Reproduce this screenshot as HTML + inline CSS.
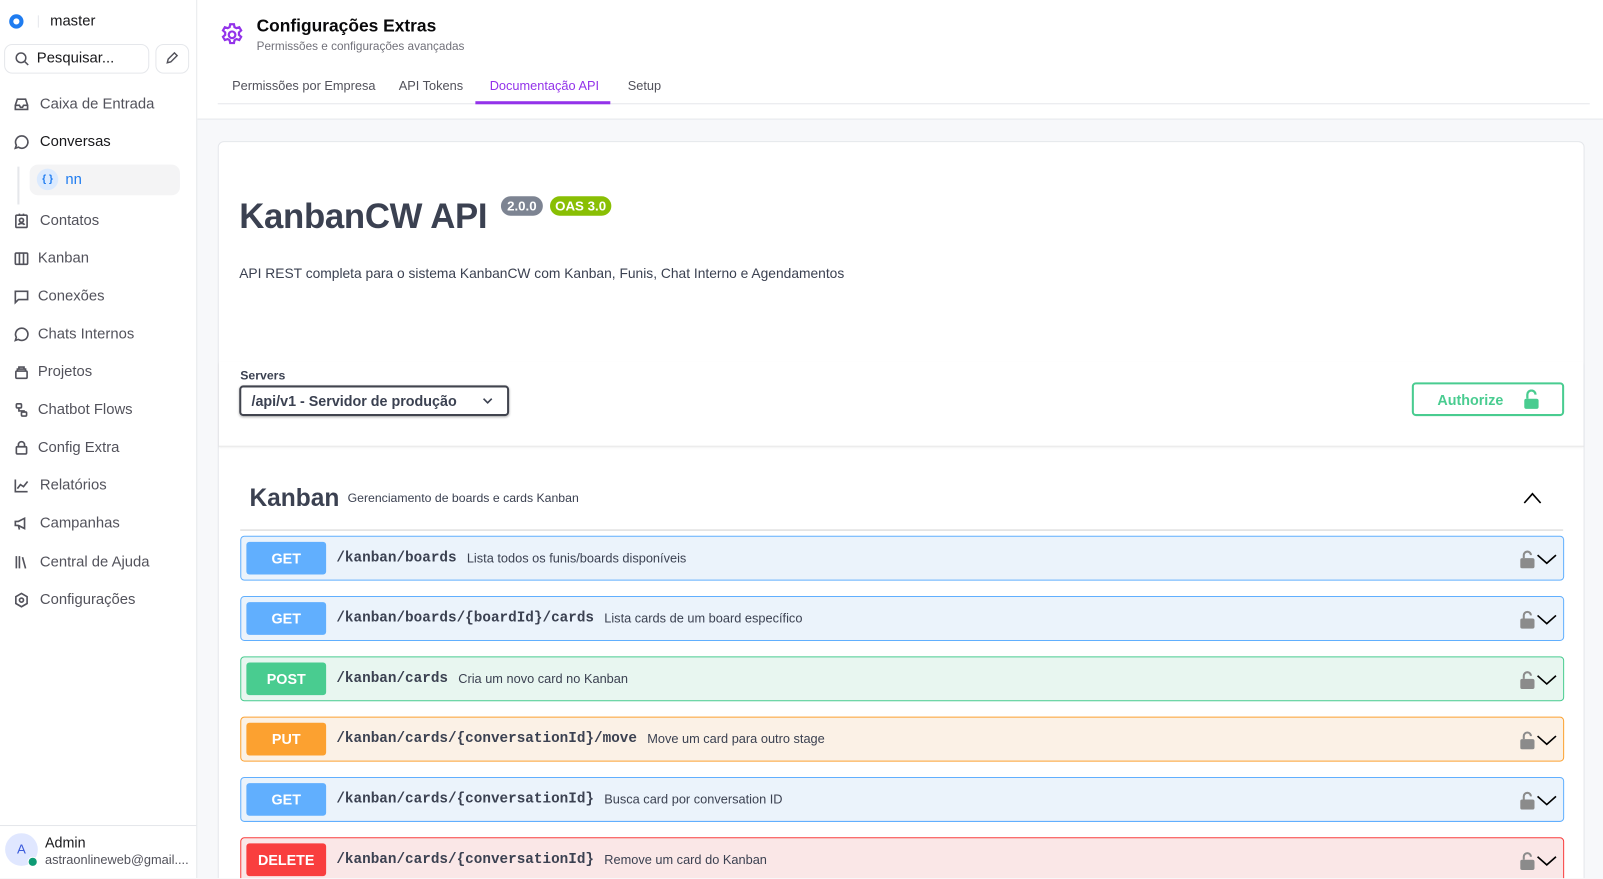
<!DOCTYPE html>
<html><head><meta charset="utf-8"><style>
*{box-sizing:border-box;margin:0;padding:0}
html,body{width:1603px;height:879px;overflow:hidden;background:#f7f8fa}
#w{position:absolute;left:0;top:0;width:1568px;height:859px;overflow:hidden;transform:scale(1.02232);transform-origin:0 0;font-family:"Liberation Sans",sans-serif;background:#f7f8fa}
.sb{position:absolute;left:0;top:0;width:193px;height:859px;background:#fff;border-right:1px solid #e5e7eb}
.sb .it{position:absolute;left:13px;display:flex;align-items:center;gap:8px;font-size:14.5px;color:#52525b}
.sb svg{width:16px;height:16px;fill:none;stroke:#52525b;stroke-width:1.6}
.hdr{position:absolute;left:193px;top:0;right:0;height:117px;background:#fff;border-bottom:1px solid #e5e7eb}
.tab{position:absolute;top:77px;font-size:12.5px;color:#52525b}
.card{position:absolute;left:213px;top:138px;width:1337px;height:760px;background:#fff;border:1px solid #e5e7eb;border-radius:6px}
.row{position:absolute;left:21px;width:1295px;height:44px;border:1px solid;border-radius:4px;display:flex;align-items:center}
.m{width:78px;height:32px;margin-left:5px;border-radius:3px;color:#fff;font-weight:bold;font-size:14px;display:flex;align-items:center;justify-content:center}
.p{font-family:"Liberation Mono",monospace;font-weight:bold;font-size:14px;color:#3b4151;margin-left:10px}
.d{font-size:12.5px;color:#3b4151;margin-left:10px}
.ic{position:absolute;right:6px;top:13px;display:flex;gap:2px;align-items:center}
</style></head><body><div id="w">
<div class="sb">
 <div style="position:absolute;left:9px;top:14px;width:14px;height:14px;border-radius:50%;border:4px solid #1f7cf0"></div>
 <div style="position:absolute;left:37px;top:15px;width:1px;height:12px;background:#e5e7eb"></div>
 <div style="position:absolute;left:49px;top:13px;font-size:14.5px;color:#18181b">master</div>
 <div style="position:absolute;left:4px;top:43px;width:142px;height:29px;border:1px solid #e5e7eb;border-radius:8px"></div>
 <svg style="position:absolute;left:14px;top:50px;width:15px;height:15px" viewBox="0 0 16 16"><circle cx="7" cy="7" r="5"/><path d="M11 11l3.5 3.5"/></svg>
 <div style="position:absolute;left:36px;top:49px;font-size:14.5px;color:#18181b">Pesquisar...</div>
 <div style="position:absolute;left:152px;top:43px;width:33px;height:29px;border:1px solid #e5e7eb;border-radius:8px"></div>
 <svg style="position:absolute;left:161px;top:50px;width:14px;height:14px" viewBox="0 0 16 16"><path d="M3 13l1-4 7-7 3 3-7 7z"/></svg>
 <div class="it" style="top:94px"><svg viewBox="0 0 16 16"><path d="M2 9l2-6h8l2 6v4H2zM2 9h4l1 2h2l1-2h4"/></svg><span style="margin-left:2px">Caixa de Entrada</span></div>
 <div class="it" style="top:131px;color:#18181b"><svg viewBox="0 0 16 16"><path d="M8 2a6 6 0 1 1-3 11l-3 1 1-3A6 6 0 0 1 8 2z"/></svg><span style="margin-left:2px">Conversas</span></div>
 <div style="position:absolute;left:17px;top:163px;width:2px;height:37px;background:#e5e7eb"></div>
 <div style="position:absolute;left:29px;top:161px;width:147px;height:30px;background:#f4f4f5;border-radius:8px"></div>
 <div style="position:absolute;left:36px;top:165px;width:21px;height:21px;border-radius:50%;background:#dbeafe;color:#1f7cf0;font-size:10px;text-align:center;line-height:21px;font-weight:bold">{ }</div>
 <div style="position:absolute;left:64px;top:168px;font-size:14.5px;color:#1f7cf0">nn</div>
 <div class="it" style="top:208px"><svg viewBox="0 0 16 16"><rect x="2.5" y="2.5" width="11" height="12" rx="1"/><circle cx="8" cy="7.5" r="2"/><path d="M5 12c1-2 5-2 6 0M6 1v2M10 1v2"/></svg><span style="margin-left:2px">Contatos</span></div>
 <div class="it" style="top:245px"><svg viewBox="0 0 16 16"><rect x="2" y="2.5" width="12" height="11" rx="1"/><path d="M6 2.5v11M10 2.5v11"/></svg>Kanban</div>
 <div class="it" style="top:282px"><svg viewBox="0 0 16 16"><path d="M2 3h12v8H5l-3 3z"/></svg>Conexões</div>
 <div class="it" style="top:319px"><svg viewBox="0 0 16 16"><path d="M8 2a6 6 0 1 1-3 11l-3 1 1-3A6 6 0 0 1 8 2z"/></svg>Chats Internos</div>
 <div class="it" style="top:356px"><svg viewBox="0 0 16 16"><rect x="2.5" y="7" width="11" height="7" rx="1"/><path d="M4 7V5h8v2M5.5 5V3h5v2"/></svg>Projetos</div>
 <div class="it" style="top:393px"><svg viewBox="0 0 16 16"><rect x="3" y="2" width="5" height="4" rx="1"/><rect x="8" y="10" width="5" height="4" rx="1"/><path d="M5.5 6v3h5v1"/></svg>Chatbot Flows</div>
 <div class="it" style="top:430px"><svg viewBox="0 0 16 16"><rect x="3" y="7" width="10" height="7" rx="1"/><path d="M5 7V5a3 3 0 0 1 6 0v2"/></svg>Config Extra</div>
 <div class="it" style="top:467px"><svg viewBox="0 0 16 16"><path d="M2 2v12h12M4 11l3-4 3 2 4-5"/></svg><span style="margin-left:2px">Relatórios</span></div>
 <div class="it" style="top:504px"><svg viewBox="0 0 16 16"><path d="M2 6v4h3l6 3V3L5 6zM5 10l1 4"/></svg><span style="margin-left:2px">Campanhas</span></div>
 <div class="it" style="top:542px"><svg viewBox="0 0 16 16"><path d="M3 2v12M6 2v12M9 3l3 11"/></svg><span style="margin-left:2px">Central de Ajuda</span></div>
 <div class="it" style="top:579px"><svg viewBox="0 0 16 16"><path d="M8 1.5l5.5 3.2v6.6L8 14.5l-5.5-3.2V4.7z"/><circle cx="8" cy="8" r="2"/></svg><span style="margin-left:2px">Configurações</span></div>
 <div style="position:absolute;left:0;top:807px;width:192px;height:1px;background:#e5e7eb"></div>
 <div style="position:absolute;left:5px;top:815px;width:32px;height:32px;border-radius:50%;background:#e0e7ff;color:#3b5bdb;font-size:13px;text-align:center;line-height:32px">A</div>
 <div style="position:absolute;left:27px;top:838px;width:10px;height:10px;border-radius:50%;background:#0f9b75;border:1.5px solid #fff"></div>
 <div style="position:absolute;left:44px;top:816px;font-size:14px;color:#18181b">Admin</div>
 <div style="position:absolute;left:44px;top:834px;font-size:12.5px;color:#52525b">astraonlineweb@gmail....</div>
</div>
<div class="hdr">
 <svg style="position:absolute;left:21px;top:21px;width:26px;height:26px" viewBox="0 0 24 24" fill="none" stroke="#9333ea" stroke-width="2"><path d="M10.3 2.5h3.4l.5 2.6 1.8 1 2.5-.9 1.7 2.9-2 1.8v2.2l2 1.8-1.7 2.9-2.5-.9-1.8 1-.5 2.6h-3.4l-.5-2.6-1.8-1-2.5.9-1.7-2.9 2-1.8v-2.2l-2-1.8 1.7-2.9 2.5.9 1.8-1z"/><circle cx="12" cy="12" r="3"/></svg>
 <div style="position:absolute;left:58px;top:16px;font-size:17px;font-weight:bold;color:#09090b">Configurações Extras</div>
 <div style="position:absolute;left:58px;top:40px;font-size:11.5px;color:#71717a">Permissões e configurações avançadas</div>
 <div class="tab" style="left:34px">Permissões por Empresa</div>
 <div class="tab" style="left:197px">API Tokens</div>
 <div class="tab" style="left:286px;color:#9333ea">Documentação API</div>
 <div class="tab" style="left:421px">Setup</div>
 <div style="position:absolute;left:20px;right:13px;top:101px;height:1px;background:#e5e7eb"></div>
 <div style="position:absolute;left:272px;width:132px;top:99px;height:3px;background:#9333ea"></div>
</div>
<div class="card">
 <div style="position:absolute;left:20px;top:54px;font-size:34px;font-weight:bold;color:#3b4151;letter-spacing:-0.3px">KanbanCW API</div>
 <div style="position:absolute;left:276px;top:53px;background:#7d8492;color:#fff;font-size:13px;font-weight:bold;padding:2px 6px;border-radius:10px">2.0.0</div>
 <div style="position:absolute;left:324px;top:53px;background:#89bf04;color:#fff;font-size:13px;font-weight:bold;padding:2px 5px;border-radius:10px">OAS 3.0</div>
 <div style="position:absolute;left:20px;top:121px;font-size:13.5px;color:#3b4151">API REST completa para o sistema KanbanCW com Kanban, Funis, Chat Interno e Agendamentos</div>
 <div style="position:absolute;left:0;right:0;top:215px;height:83px;border-bottom:1px solid #e5e5e5;box-shadow:0 1px 2px rgba(0,0,0,.08)"></div>
 <div style="position:absolute;left:21px;top:221px;font-size:12px;font-weight:bold;color:#3b4151">Servers</div>
 <div style="position:absolute;left:20px;top:238px;width:264px;height:30px;border:2px solid #41444e;border-radius:4px;font-size:14px;font-weight:bold;color:#3b4151;padding:5px 10px;box-shadow:0 1px 2px rgba(0,0,0,.25)">/api/v1 - Servidor de produção<svg style="position:absolute;right:14px;top:10px" width="10" height="6" viewBox="0 0 10 6"><path d="M1 1l4 4 4-4" fill="none" stroke="#3b4151" stroke-width="1.6"/></svg></div>
 <div style="position:absolute;left:1167px;top:235px;width:149px;height:33px;border:2px solid #49cc90;border-radius:4px;color:#49cc90;font-weight:bold;font-size:14px;padding:7px 0 0 23px">Authorize
  <svg style="position:absolute;right:22px;top:5px" width="16" height="20" viewBox="0 0 16 20"><path d="M4 9V5a4 4 0 0 1 8 0" fill="none" stroke="#49cc90" stroke-width="2.2"/><rect x="1" y="9" width="14" height="10" rx="2" fill="#49cc90"/></svg></div>
 <div style="position:absolute;left:30px;top:335px;font-size:24px;font-weight:bold;color:#3b4151">Kanban</div>
 <div style="position:absolute;left:126px;top:341px;font-size:12px;color:#3b4151">Gerenciamento de boards e cards Kanban</div>
 <svg style="position:absolute;left:1276px;top:342px" width="18" height="12" viewBox="0 0 18 12"><path d="M1 11l8-9 8 9" fill="none" stroke="#000" stroke-width="1.6"/></svg>
 <div style="position:absolute;left:21px;right:20px;top:379px;height:1px;background:#d0d0d0"></div>
 <div class="row" style="top:385px;background:#ebf3fb;border-color:#61affe"><div class="m" style="background:#61affe">GET</div><span class="p">/kanban/boards</span><span class="d">Lista todos os funis/boards disponíveis</span><div class="ic"><svg width="14" height="18" viewBox="0 0 14 18"><path d="M3.5 8V5a3.5 3.5 0 0 1 7 0" fill="none" stroke="#8b8b8b" stroke-width="2"/><rect x="0" y="8" width="14" height="10" rx="2" fill="#8b8b8b"/></svg><svg width="20" height="12" viewBox="0 0 20 12"><path d="M1 2l9 8 9-8" fill="none" stroke="#000" stroke-width="1.6"/></svg></div></div>
 <div class="row" style="top:444px;background:#ebf3fb;border-color:#61affe"><div class="m" style="background:#61affe">GET</div><span class="p">/kanban/boards/{boardId}/cards</span><span class="d">Lista cards de um board específico</span><div class="ic"><svg width="14" height="18" viewBox="0 0 14 18"><path d="M3.5 8V5a3.5 3.5 0 0 1 7 0" fill="none" stroke="#8b8b8b" stroke-width="2"/><rect x="0" y="8" width="14" height="10" rx="2" fill="#8b8b8b"/></svg><svg width="20" height="12" viewBox="0 0 20 12"><path d="M1 2l9 8 9-8" fill="none" stroke="#000" stroke-width="1.6"/></svg></div></div>
 <div class="row" style="top:503px;background:#e8f6f0;border-color:#49cc90"><div class="m" style="background:#49cc90">POST</div><span class="p">/kanban/cards</span><span class="d">Cria um novo card no Kanban</span><div class="ic"><svg width="14" height="18" viewBox="0 0 14 18"><path d="M3.5 8V5a3.5 3.5 0 0 1 7 0" fill="none" stroke="#8b8b8b" stroke-width="2"/><rect x="0" y="8" width="14" height="10" rx="2" fill="#8b8b8b"/></svg><svg width="20" height="12" viewBox="0 0 20 12"><path d="M1 2l9 8 9-8" fill="none" stroke="#000" stroke-width="1.6"/></svg></div></div>
 <div class="row" style="top:562px;background:#fbf1e6;border-color:#fca130"><div class="m" style="background:#fca130">PUT</div><span class="p">/kanban/cards/{conversationId}/move</span><span class="d">Move um card para outro stage</span><div class="ic"><svg width="14" height="18" viewBox="0 0 14 18"><path d="M3.5 8V5a3.5 3.5 0 0 1 7 0" fill="none" stroke="#8b8b8b" stroke-width="2"/><rect x="0" y="8" width="14" height="10" rx="2" fill="#8b8b8b"/></svg><svg width="20" height="12" viewBox="0 0 20 12"><path d="M1 2l9 8 9-8" fill="none" stroke="#000" stroke-width="1.6"/></svg></div></div>
 <div class="row" style="top:621px;background:#ebf3fb;border-color:#61affe"><div class="m" style="background:#61affe">GET</div><span class="p">/kanban/cards/{conversationId}</span><span class="d">Busca card por conversation ID</span><div class="ic"><svg width="14" height="18" viewBox="0 0 14 18"><path d="M3.5 8V5a3.5 3.5 0 0 1 7 0" fill="none" stroke="#8b8b8b" stroke-width="2"/><rect x="0" y="8" width="14" height="10" rx="2" fill="#8b8b8b"/></svg><svg width="20" height="12" viewBox="0 0 20 12"><path d="M1 2l9 8 9-8" fill="none" stroke="#000" stroke-width="1.6"/></svg></div></div>
 <div class="row" style="top:680px;background:#fae7e7;border-color:#f93e3e"><div class="m" style="background:#f93e3e">DELETE</div><span class="p">/kanban/cards/{conversationId}</span><span class="d">Remove um card do Kanban</span><div class="ic"><svg width="14" height="18" viewBox="0 0 14 18"><path d="M3.5 8V5a3.5 3.5 0 0 1 7 0" fill="none" stroke="#8b8b8b" stroke-width="2"/><rect x="0" y="8" width="14" height="10" rx="2" fill="#8b8b8b"/></svg><svg width="20" height="12" viewBox="0 0 20 12"><path d="M1 2l9 8 9-8" fill="none" stroke="#000" stroke-width="1.6"/></svg></div></div>
</div>
</div></body></html>
